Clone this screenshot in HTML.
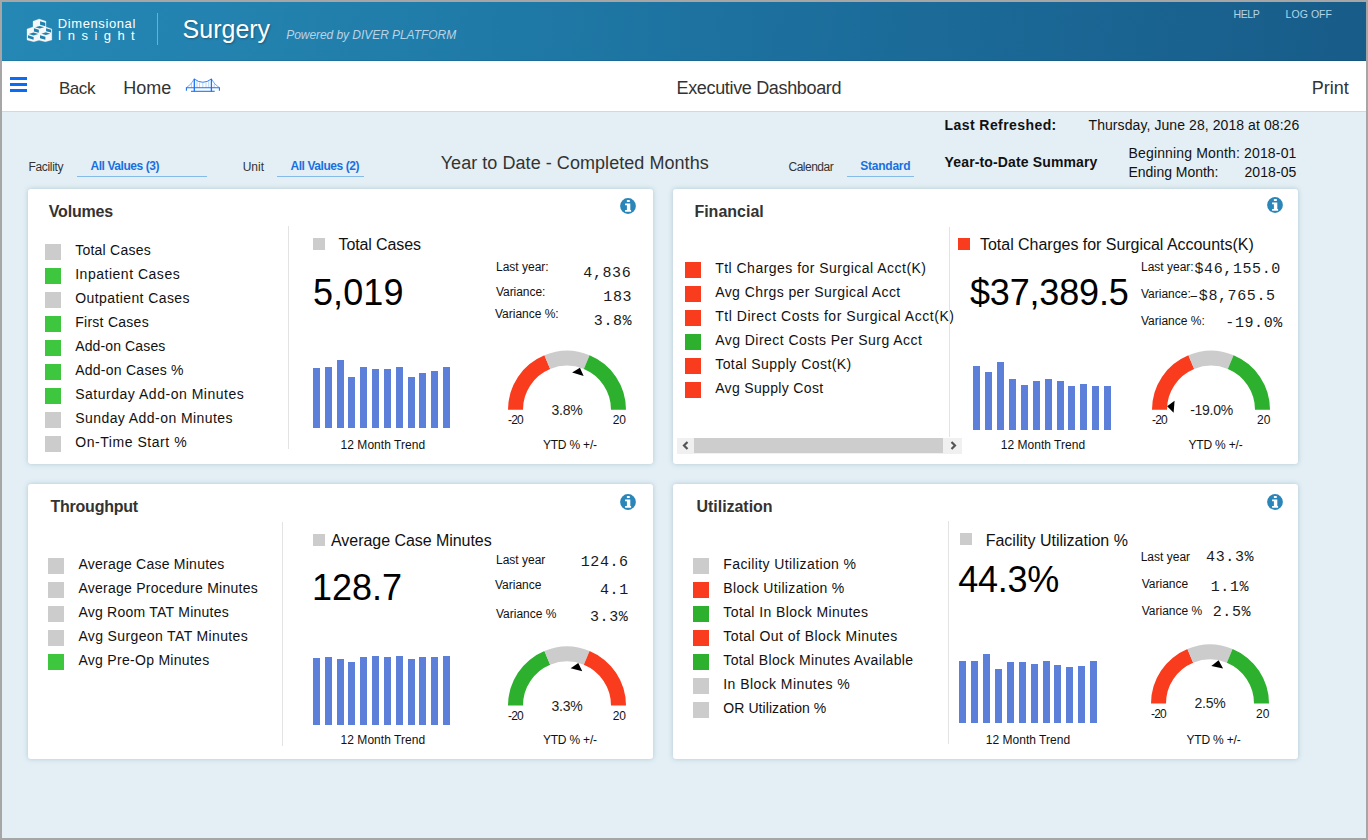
<!DOCTYPE html>
<html><head><meta charset="utf-8"><title>Executive Dashboard</title>
<style>
html,body{margin:0;padding:0;}
body{width:1368px;height:840px;position:relative;overflow:hidden;background:#e3eff5;font-family:'Liberation Sans', sans-serif;}
.t{position:absolute;white-space:nowrap;}
#frame{position:absolute;left:0;top:0;width:1368px;height:840px;box-sizing:border-box;border:2px solid #a6a6a6;pointer-events:none;}
</style></head><body>
<div style="position:absolute;left:0;top:0;width:1368px;height:61px;background:linear-gradient(95deg,#2487b4 0%,#2381ae 20%,#1f7aa7 35%,#1b6a98 68%,#185c89 100%);"></div>
<div style="position:absolute;left:0;top:60px;width:1368px;height:1px;background:rgba(0,30,60,0.12);"></div>
<svg style="position:absolute;left:24px;top:16px" width="30" height="28" viewBox="0 0 900 840">
<path d="M90 390 L270 330 L270 160 L455 90 L660 160 L660 330 L835 390 L835 720 L640 770 L450 730 L290 770 L90 720 Z" fill="#f4f6f7" stroke="#f4f6f7" stroke-width="8" stroke-linejoin="round"/>
<g fill="#1f7fae">
<path d="M482 155 L640 205 L640 310 L482 262 Z"/>
<path d="M335 338 L470 298 L605 338 L470 378 Z"/>
<path d="M298 365 L445 410 L445 505 L298 462 Z"/>
<path d="M662 368 L812 412 L812 498 L662 455 Z"/>
<path d="M145 540 L285 498 L425 540 L285 582 Z"/>
<path d="M525 530 L655 488 L785 530 L655 570 Z"/>
<path d="M118 580 L288 630 L288 712 L118 662 Z"/>
<path d="M480 575 L642 622 L642 712 L480 665 Z"/>
</g></svg>
<div class="t" style="left:57.80px;top:16.99px;font:normal 400 13px/13px 'Liberation Sans', sans-serif;color:#ffffff;letter-spacing:0.598px;">Dimensional</div>
<div class="t" style="left:57.80px;top:28.99px;font:normal 400 13px/13px 'Liberation Sans', sans-serif;color:#ffffff;letter-spacing:6.424px;">Insight</div>
<div style="position:absolute;left:157px;top:13px;width:1px;height:32px;background:rgba(255,255,255,0.35);"></div>
<div class="t" style="left:182.60px;top:16.83px;font:normal 400 25px/25px 'Liberation Sans', sans-serif;color:#ffffff;letter-spacing:-0.006px;text-shadow:1px 1px 2px rgba(0,0,0,0.3);">Surgery</div>
<div class="t" style="left:286.20px;top:28.84px;font:italic 400 12px/12px 'Liberation Sans', sans-serif;color:#b9d3e5;letter-spacing:-0.051px;">Powered by DIVER PLATFORM</div>
<div class="t" style="left:1233.50px;top:9.11px;font:normal 400 10.5px/10.5px 'Liberation Sans', sans-serif;color:#b3d5e6;letter-spacing:-0.399px;">HELP</div>
<div class="t" style="left:1285.50px;top:9.11px;font:normal 400 10.5px/10.5px 'Liberation Sans', sans-serif;color:#b3d5e6;letter-spacing:0.073px;">LOG OFF</div>
<div style="position:absolute;left:0px;top:61px;width:1368px;height:50px;background:#ffffff;"></div>
<div style="position:absolute;left:0px;top:111px;width:1368px;height:1px;background:#d4d8da;"></div>
<div style="position:absolute;left:10px;top:77px;width:17px;height:3px;background:#0a6cf5;"></div>
<div style="position:absolute;left:10px;top:83px;width:17px;height:3px;background:#0a6cf5;"></div>
<div style="position:absolute;left:10px;top:89px;width:17px;height:3px;background:#0a6cf5;"></div>
<div class="t" style="left:58.90px;top:79.91px;font:normal 400 17px/17px 'Liberation Sans', sans-serif;color:#333333;letter-spacing:-0.433px;">Back</div>
<div class="t" style="left:123.30px;top:79.06px;font:normal 400 18px/18px 'Liberation Sans', sans-serif;color:#333333;letter-spacing:-0.001px;">Home</div>
<svg style="position:absolute;left:185px;top:78px" width="36" height="15" viewBox="0 0 36 15">
<g stroke="#1a74f2" fill="none">
<path d="M9.3 0.8 L9.3 13.5 M26.4 0.8 L26.4 13.5" stroke-width="1.3"/>
<path d="M6 13.3 L29.7 13.3" stroke-width="1.1"/>
<path d="M1.4 12.7 L1.4 9.7 L34.4 9.7 L34.4 12.7" stroke-width="1.1"/>
<path d="M9.3 1 Q17.85 7.5 26.4 1" stroke-width="0.9"/>
<path d="M9.3 1 Q6 7 1.4 9.7 M26.4 1 Q29.7 7 34.4 9.7" stroke-width="0.8" opacity="0.75"/>
<path d="M12 3.3 V9.7 M14.6 4.6 V9.7 M17.8 5.1 V9.7 M21 4.6 V9.7 M23.7 3.3 V9.7 M6.5 5.6 V9.7 M29.2 5.6 V9.7" stroke-width="0.9" opacity="0.35"/>
</g></svg>
<div class="t" style="left:676.50px;top:78.96px;font:normal 400 18px/18px 'Liberation Sans', sans-serif;color:#333333;letter-spacing:-0.338px;">Executive Dashboard</div>
<div class="t" style="left:1311.80px;top:79.36px;font:normal 400 18px/18px 'Liberation Sans', sans-serif;color:#333333;letter-spacing:-0.002px;">Print</div>
<div class="t" style="left:28.50px;top:161.04px;font:normal 400 12px/12px 'Liberation Sans', sans-serif;color:#333333;letter-spacing:-0.337px;">Facility</div>
<div class="t" style="left:90.50px;top:159.54px;font:normal 700 12px/12px 'Liberation Sans', sans-serif;color:#1a6fe0;letter-spacing:-0.438px;">All Values (3)</div>
<div style="position:absolute;left:77px;top:176px;width:130px;height:1px;background:#86bbe8;"></div>
<div class="t" style="left:242.70px;top:161.04px;font:normal 400 12px/12px 'Liberation Sans', sans-serif;color:#333333;letter-spacing:-0.003px;">Unit</div>
<div class="t" style="left:290.50px;top:159.54px;font:normal 700 12px/12px 'Liberation Sans', sans-serif;color:#1a6fe0;letter-spacing:-0.440px;">All Values (2)</div>
<div style="position:absolute;left:277px;top:176px;width:87px;height:1px;background:#86bbe8;"></div>
<div class="t" style="left:440.70px;top:153.96px;font:normal 400 18px/18px 'Liberation Sans', sans-serif;color:#333333;letter-spacing:0.052px;">Year to Date - Completed Months</div>
<div class="t" style="left:788.50px;top:160.64px;font:normal 400 12px/12px 'Liberation Sans', sans-serif;color:#333333;letter-spacing:-0.498px;">Calendar</div>
<div class="t" style="left:860.30px;top:159.64px;font:normal 700 12px/12px 'Liberation Sans', sans-serif;color:#1a6fe0;letter-spacing:-0.241px;">Standard</div>
<div style="position:absolute;left:847px;top:176px;width:67px;height:1px;background:#86bbe8;"></div>
<div class="t" style="left:944.60px;top:118.15px;font:normal 700 14px/14px 'Liberation Sans', sans-serif;color:#111111;letter-spacing:0.419px;">Last Refreshed:</div>
<div class="t" style="left:1088.50px;top:118.15px;font:normal 400 14px/14px 'Liberation Sans', sans-serif;color:#111111;letter-spacing:0.078px;">Thursday, June 28, 2018 at 08:26</div>
<div class="t" style="left:944.60px;top:154.55px;font:normal 700 14px/14px 'Liberation Sans', sans-serif;color:#111111;letter-spacing:0.138px;">Year-to-Date Summary</div>
<div class="t" style="left:1128.50px;top:146.35px;font:normal 400 14px/14px 'Liberation Sans', sans-serif;color:#111111;letter-spacing:0.158px;">Beginning Month: 2018-01</div>
<div class="t" style="left:1128.50px;top:164.55px;font:normal 400 14px/14px 'Liberation Sans', sans-serif;color:#111111;letter-spacing:-0.032px;">Ending Month:</div>
<div class="t" style="left:1244.50px;top:164.55px;font:normal 400 14px/14px 'Liberation Sans', sans-serif;color:#111111;letter-spacing:0.070px;">2018-05</div>
<div style="position:absolute;background:#fff;border-radius:3px;box-shadow:0 0 5px 0px rgba(120,150,170,0.45);left:28px;top:189px;width:625px;height:275px;"></div>
<div style="position:absolute;background:#fff;border-radius:3px;box-shadow:0 0 5px 0px rgba(120,150,170,0.45);left:673px;top:189px;width:625px;height:275px;"></div>
<div style="position:absolute;background:#fff;border-radius:3px;box-shadow:0 0 5px 0px rgba(120,150,170,0.45);left:28px;top:484px;width:625px;height:275px;"></div>
<div style="position:absolute;background:#fff;border-radius:3px;box-shadow:0 0 5px 0px rgba(120,150,170,0.45);left:673px;top:484px;width:625px;height:275px;"></div>
<div class="t" style="left:48.80px;top:203.65px;font:normal 700 16px/16px 'Liberation Sans', sans-serif;color:#333333;letter-spacing:-0.184px;">Volumes</div>
<div style="position:absolute;left:45px;top:244px;width:16px;height:16px;background:#cccccc;"></div>
<div class="t" style="left:75.20px;top:243.35px;font:normal 400 14px/14px 'Liberation Sans', sans-serif;color:#111111;letter-spacing:0.241px;">Total Cases</div>
<div style="position:absolute;left:45px;top:268px;width:16px;height:16px;background:#3ec63e;"></div>
<div class="t" style="left:75.20px;top:267.35px;font:normal 400 14px/14px 'Liberation Sans', sans-serif;color:#111111;letter-spacing:0.515px;">Inpatient Cases</div>
<div style="position:absolute;left:45px;top:292px;width:16px;height:16px;background:#cccccc;"></div>
<div class="t" style="left:75.20px;top:291.35px;font:normal 400 14px/14px 'Liberation Sans', sans-serif;color:#111111;letter-spacing:0.412px;">Outpatient Cases</div>
<div style="position:absolute;left:45px;top:316px;width:16px;height:16px;background:#3ec63e;"></div>
<div class="t" style="left:75.20px;top:315.35px;font:normal 400 14px/14px 'Liberation Sans', sans-serif;color:#111111;letter-spacing:0.266px;">First Cases</div>
<div style="position:absolute;left:45px;top:340px;width:16px;height:16px;background:#3ec63e;"></div>
<div class="t" style="left:75.20px;top:339.35px;font:normal 400 14px/14px 'Liberation Sans', sans-serif;color:#111111;letter-spacing:0.127px;">Add-on Cases</div>
<div style="position:absolute;left:45px;top:364px;width:16px;height:16px;background:#3ec63e;"></div>
<div class="t" style="left:75.20px;top:363.35px;font:normal 400 14px/14px 'Liberation Sans', sans-serif;color:#111111;letter-spacing:0.254px;">Add-on Cases %</div>
<div style="position:absolute;left:45px;top:388px;width:16px;height:16px;background:#3ec63e;"></div>
<div class="t" style="left:75.20px;top:387.35px;font:normal 400 14px/14px 'Liberation Sans', sans-serif;color:#111111;letter-spacing:0.517px;">Saturday Add-on Minutes</div>
<div style="position:absolute;left:45px;top:412px;width:16px;height:16px;background:#cccccc;"></div>
<div class="t" style="left:75.20px;top:411.35px;font:normal 400 14px/14px 'Liberation Sans', sans-serif;color:#111111;letter-spacing:0.436px;">Sunday Add-on Minutes</div>
<div style="position:absolute;left:45px;top:436px;width:16px;height:16px;background:#cccccc;"></div>
<div class="t" style="left:75.20px;top:435.35px;font:normal 400 14px/14px 'Liberation Sans', sans-serif;color:#111111;letter-spacing:0.553px;">On-Time Start %</div>
<div style="position:absolute;left:288px;top:226px;width:1px;height:223px;background:#e3e3e3;"></div>
<div style="position:absolute;left:313px;top:238px;width:12px;height:12px;background:#cccccc;"></div>
<div class="t" style="left:338.50px;top:237.45px;font:normal 400 16px/16px 'Liberation Sans', sans-serif;color:#111111;letter-spacing:-0.109px;">Total Cases</div>
<div class="t" style="left:312.90px;top:274.52px;font:normal 400 36px/36px 'Liberation Sans', sans-serif;color:#000000;letter-spacing:0.108px;">5,019</div>
<div class="t" style="left:496.00px;top:260.84px;font:normal 400 12px/12px 'Liberation Sans', sans-serif;color:#111111;letter-spacing:-0.007px;">Last year:</div>
<div class="t" style="left:496.00px;top:285.84px;font:normal 400 12px/12px 'Liberation Sans', sans-serif;color:#111111;letter-spacing:-0.059px;">Variance:</div>
<div class="t" style="left:495.00px;top:308.14px;font:normal 400 12px/12px 'Liberation Sans', sans-serif;color:#111111;letter-spacing:-0.017px;">Variance %:</div>
<div class="t" style="left:583.30px;top:265.61px;font:normal 400 15px/15px 'Liberation Mono', monospace;color:#1a1a1a;letter-spacing:0.600px;">4,836</div>
<div class="t" style="left:603.30px;top:290.41px;font:normal 400 15px/15px 'Liberation Mono', monospace;color:#1a1a1a;letter-spacing:0.600px;">183</div>
<div class="t" style="left:593.80px;top:313.81px;font:normal 400 15px/15px 'Liberation Mono', monospace;color:#1a1a1a;letter-spacing:0.600px;">3.8%</div>
<div style="position:absolute;left:313px;top:368px;width:7px;height:60px;background:#5c80d9;"></div>
<div style="position:absolute;left:325px;top:367px;width:7px;height:61px;background:#5c80d9;"></div>
<div style="position:absolute;left:337px;top:360px;width:7px;height:68px;background:#5c80d9;"></div>
<div style="position:absolute;left:348px;top:377px;width:7px;height:51px;background:#5c80d9;"></div>
<div style="position:absolute;left:360px;top:367px;width:7px;height:61px;background:#5c80d9;"></div>
<div style="position:absolute;left:372px;top:369px;width:7px;height:59px;background:#5c80d9;"></div>
<div style="position:absolute;left:384px;top:369px;width:7px;height:59px;background:#5c80d9;"></div>
<div style="position:absolute;left:396px;top:367px;width:7px;height:61px;background:#5c80d9;"></div>
<div style="position:absolute;left:408px;top:377px;width:7px;height:51px;background:#5c80d9;"></div>
<div style="position:absolute;left:419px;top:373px;width:7px;height:55px;background:#5c80d9;"></div>
<div style="position:absolute;left:431px;top:371px;width:7px;height:57px;background:#5c80d9;"></div>
<div style="position:absolute;left:443px;top:367px;width:7px;height:61px;background:#5c80d9;"></div>
<div class="t" style="left:340.60px;top:438.84px;font:normal 400 12px/12px 'Liberation Sans', sans-serif;color:#111111;letter-spacing:0.031px;">12 Month Trend</div>
<svg style="position:absolute;left:0;top:0" width="1368" height="840"><path d="M508.00 409.70 A59 59 0 0 1 544.42 355.19 L550.16 369.05 A44 44 0 0 0 523.00 409.70 Z" fill="#fa3c1e"/><path d="M544.42 355.19 A59 59 0 0 1 589.58 355.19 L583.84 369.05 A44 44 0 0 0 550.16 369.05 Z" fill="#cccccc"/><path d="M589.58 355.19 A59 59 0 0 1 626.00 409.70 L611.00 409.70 A44 44 0 0 0 583.84 369.05 Z" fill="#2db02d"/><path d="M579.94 367.65 L572.14 372.57 L583.61 376.10 Z" fill="#000"/></svg>
<div class="t" style="left:267.00px;width:600px;text-align:center;top:403.15px;font:normal 400 14px/14px 'Liberation Sans', sans-serif;color:#222222;letter-spacing:-0.287px;">3.8%</div>
<div class="t" style="left:508.00px;top:414.14px;font:normal 400 12px/12px 'Liberation Sans', sans-serif;color:#111111;letter-spacing:-0.835px;">-20</div>
<div class="t" style="left:612.70px;top:414.14px;font:normal 400 12px/12px 'Liberation Sans', sans-serif;color:#111111;letter-spacing:0.000px;">20</div>
<div class="t" style="left:542.90px;top:438.84px;font:normal 400 12px/12px 'Liberation Sans', sans-serif;color:#111111;letter-spacing:-0.185px;">YTD % +/-</div>
<svg style="position:absolute;left:620px;top:198px" width="16" height="16" viewBox="0 0 16 16">
<circle cx="8" cy="8" r="7.9" fill="#2a86b9"/><rect x="6.9" y="2" width="2.9" height="2.1" rx="0.5" fill="#fff"/>
<path d="M5.1 5.6 H10.3 V12.1 H11.1 V13.8 H5.1 V12.1 H6.9 V7.3 H5.1 Z" fill="#fff"/></svg>
<div class="t" style="left:694.40px;top:203.65px;font:normal 700 16px/16px 'Liberation Sans', sans-serif;color:#333333;letter-spacing:-0.001px;">Financial</div>
<div style="position:absolute;left:685px;top:262px;width:16px;height:16px;background:#fa3c1e;"></div>
<div class="t" style="left:715.20px;top:261.35px;font:normal 400 14px/14px 'Liberation Sans', sans-serif;color:#111111;letter-spacing:0.477px;">Ttl Charges for Surgical Acct(K)</div>
<div style="position:absolute;left:685px;top:286px;width:16px;height:16px;background:#fa3c1e;"></div>
<div class="t" style="left:715.20px;top:285.35px;font:normal 400 14px/14px 'Liberation Sans', sans-serif;color:#111111;letter-spacing:0.423px;">Avg Chrgs per Surgical Acct</div>
<div style="position:absolute;left:685px;top:310px;width:16px;height:16px;background:#fa3c1e;"></div>
<div class="t" style="left:715.20px;top:309.35px;font:normal 400 14px/14px 'Liberation Sans', sans-serif;color:#111111;letter-spacing:0.539px;">Ttl Direct Costs for Surgical Acct(K)</div>
<div style="position:absolute;left:685px;top:334px;width:16px;height:16px;background:#2db02d;"></div>
<div class="t" style="left:715.20px;top:333.35px;font:normal 400 14px/14px 'Liberation Sans', sans-serif;color:#111111;letter-spacing:0.456px;">Avg Direct Costs Per Surg Acct</div>
<div style="position:absolute;left:685px;top:358px;width:16px;height:16px;background:#fa3c1e;"></div>
<div class="t" style="left:715.20px;top:357.35px;font:normal 400 14px/14px 'Liberation Sans', sans-serif;color:#111111;letter-spacing:0.447px;">Total Supply Cost(K)</div>
<div style="position:absolute;left:685px;top:382px;width:16px;height:16px;background:#fa3c1e;"></div>
<div class="t" style="left:715.20px;top:381.35px;font:normal 400 14px/14px 'Liberation Sans', sans-serif;color:#111111;letter-spacing:0.336px;">Avg Supply Cost</div>
<div style="position:absolute;left:949px;top:227px;width:1px;height:210px;background:#e3e3e3;"></div>
<div style="position:absolute;left:677px;top:438px;width:285px;height:16px;background:#f0f0f0;"></div>
<div style="position:absolute;left:694px;top:438px;width:249px;height:15px;background:#cdcdcd;"></div>
<svg style="position:absolute;left:677px;top:438px" width="285" height="15"><path d="M10.5 4 L7 7.5 L10.5 11" stroke="#555555" stroke-width="2.2" fill="none"/><path d="M274.5 4 L278 7.5 L274.5 11" stroke="#555555" stroke-width="2.2" fill="none"/></svg>
<div style="position:absolute;left:958px;top:238px;width:12px;height:12px;background:#fa3c1e;"></div>
<div class="t" style="left:980.00px;top:237.45px;font:normal 400 16px/16px 'Liberation Sans', sans-serif;color:#111111;letter-spacing:-0.028px;">Total Charges for Surgical Accounts(K)</div>
<div class="t" style="left:970.00px;top:274.52px;font:normal 400 36px/36px 'Liberation Sans', sans-serif;color:#000000;letter-spacing:-0.179px;">$37,389.5</div>
<div class="t" style="left:1141.00px;top:260.84px;font:normal 400 12px/12px 'Liberation Sans', sans-serif;color:#111111;letter-spacing:0.000px;">Last year:</div>
<div class="t" style="left:1141.00px;top:288.14px;font:normal 400 12px/12px 'Liberation Sans', sans-serif;color:#111111;letter-spacing:0.000px;">Variance:</div>
<div class="t" style="left:1141.00px;top:314.84px;font:normal 400 12px/12px 'Liberation Sans', sans-serif;color:#111111;letter-spacing:0.000px;">Variance %:</div>
<div class="t" style="left:1194.50px;top:262.21px;font:normal 400 15px/15px 'Liberation Mono', monospace;color:#1a1a1a;letter-spacing:0.600px;">$46,155.0</div>
<div class="t" style="left:1189.20px;top:288.81px;font:normal 400 15px/15px 'Liberation Mono', monospace;color:#1a1a1a;letter-spacing:0.600px;">–$8,765.5</div>
<div class="t" style="left:1225.30px;top:315.51px;font:normal 400 15px/15px 'Liberation Mono', monospace;color:#1a1a1a;letter-spacing:0.600px;">-19.0%</div>
<div style="position:absolute;left:973px;top:366px;width:7px;height:64px;background:#5c80d9;"></div>
<div style="position:absolute;left:985px;top:372px;width:7px;height:58px;background:#5c80d9;"></div>
<div style="position:absolute;left:997px;top:362px;width:7px;height:68px;background:#5c80d9;"></div>
<div style="position:absolute;left:1009px;top:379px;width:7px;height:51px;background:#5c80d9;"></div>
<div style="position:absolute;left:1021px;top:385px;width:7px;height:45px;background:#5c80d9;"></div>
<div style="position:absolute;left:1033px;top:381px;width:7px;height:49px;background:#5c80d9;"></div>
<div style="position:absolute;left:1045px;top:379px;width:7px;height:51px;background:#5c80d9;"></div>
<div style="position:absolute;left:1057px;top:381px;width:7px;height:49px;background:#5c80d9;"></div>
<div style="position:absolute;left:1068px;top:386px;width:7px;height:44px;background:#5c80d9;"></div>
<div style="position:absolute;left:1080px;top:384px;width:7px;height:46px;background:#5c80d9;"></div>
<div style="position:absolute;left:1092px;top:386px;width:7px;height:44px;background:#5c80d9;"></div>
<div style="position:absolute;left:1104px;top:386px;width:7px;height:44px;background:#5c80d9;"></div>
<div class="t" style="left:1000.70px;top:439.14px;font:normal 400 12px/12px 'Liberation Sans', sans-serif;color:#111111;letter-spacing:0.031px;">12 Month Trend</div>
<svg style="position:absolute;left:0;top:0" width="1368" height="840"><path d="M1152.00 409.70 A59 59 0 0 1 1188.42 355.19 L1194.16 369.05 A44 44 0 0 0 1167.00 409.70 Z" fill="#fa3c1e"/><path d="M1188.42 355.19 A59 59 0 0 1 1233.58 355.19 L1227.84 369.05 A44 44 0 0 0 1194.16 369.05 Z" fill="#cccccc"/><path d="M1233.58 355.19 A59 59 0 0 1 1270.00 409.70 L1255.00 409.70 A44 44 0 0 0 1227.84 369.05 Z" fill="#2db02d"/><path d="M1167.14 406.25 L1173.64 412.78 L1174.58 400.82 Z" fill="#000"/></svg>
<div class="t" style="left:911.50px;width:600px;text-align:center;top:403.15px;font:normal 400 14px/14px 'Liberation Sans', sans-serif;color:#222222;letter-spacing:-0.287px;">-19.0%</div>
<div class="t" style="left:1152.00px;top:414.14px;font:normal 400 12px/12px 'Liberation Sans', sans-serif;color:#111111;letter-spacing:-0.835px;">-20</div>
<div class="t" style="left:1257.00px;top:414.14px;font:normal 400 12px/12px 'Liberation Sans', sans-serif;color:#111111;letter-spacing:0.000px;">20</div>
<div class="t" style="left:1188.50px;top:439.14px;font:normal 400 12px/12px 'Liberation Sans', sans-serif;color:#111111;letter-spacing:-0.185px;">YTD % +/-</div>
<svg style="position:absolute;left:1267px;top:197px" width="16" height="16" viewBox="0 0 16 16">
<circle cx="8" cy="8" r="7.9" fill="#2a86b9"/><rect x="6.9" y="2" width="2.9" height="2.1" rx="0.5" fill="#fff"/>
<path d="M5.1 5.6 H10.3 V12.1 H11.1 V13.8 H5.1 V12.1 H6.9 V7.3 H5.1 Z" fill="#fff"/></svg>
<div class="t" style="left:50.50px;top:498.65px;font:normal 700 16px/16px 'Liberation Sans', sans-serif;color:#333333;letter-spacing:-0.235px;">Throughput</div>
<div style="position:absolute;left:48px;top:558px;width:16px;height:16px;background:#cccccc;"></div>
<div class="t" style="left:78.40px;top:557.35px;font:normal 400 14px/14px 'Liberation Sans', sans-serif;color:#111111;letter-spacing:0.239px;">Average Case Minutes</div>
<div style="position:absolute;left:48px;top:582px;width:16px;height:16px;background:#cccccc;"></div>
<div class="t" style="left:78.40px;top:581.35px;font:normal 400 14px/14px 'Liberation Sans', sans-serif;color:#111111;letter-spacing:0.253px;">Average Procedure Minutes</div>
<div style="position:absolute;left:48px;top:606px;width:16px;height:16px;background:#cccccc;"></div>
<div class="t" style="left:78.40px;top:605.35px;font:normal 400 14px/14px 'Liberation Sans', sans-serif;color:#111111;letter-spacing:0.239px;">Avg Room TAT Minutes</div>
<div style="position:absolute;left:48px;top:630px;width:16px;height:16px;background:#cccccc;"></div>
<div class="t" style="left:78.40px;top:629.35px;font:normal 400 14px/14px 'Liberation Sans', sans-serif;color:#111111;letter-spacing:0.364px;">Avg Surgeon TAT Minutes</div>
<div style="position:absolute;left:48px;top:654px;width:16px;height:16px;background:#3ec63e;"></div>
<div class="t" style="left:78.40px;top:653.35px;font:normal 400 14px/14px 'Liberation Sans', sans-serif;color:#111111;letter-spacing:0.295px;">Avg Pre-Op Minutes</div>
<div style="position:absolute;left:282px;top:522px;width:1px;height:224px;background:#e3e3e3;"></div>
<div style="position:absolute;left:313px;top:534px;width:12px;height:12px;background:#cccccc;"></div>
<div class="t" style="left:331.00px;top:533.45px;font:normal 400 16px/16px 'Liberation Sans', sans-serif;color:#111111;letter-spacing:-0.046px;">Average Case Minutes</div>
<div class="t" style="left:312.00px;top:569.52px;font:normal 400 36px/36px 'Liberation Sans', sans-serif;color:#000000;letter-spacing:-0.017px;">128.7</div>
<div class="t" style="left:496.00px;top:554.14px;font:normal 400 12px/12px 'Liberation Sans', sans-serif;color:#111111;letter-spacing:0.000px;">Last year</div>
<div class="t" style="left:495.00px;top:579.14px;font:normal 400 12px/12px 'Liberation Sans', sans-serif;color:#111111;letter-spacing:0.000px;">Variance</div>
<div class="t" style="left:496.00px;top:607.54px;font:normal 400 12px/12px 'Liberation Sans', sans-serif;color:#111111;letter-spacing:0.000px;">Variance %</div>
<div class="t" style="left:580.70px;top:555.21px;font:normal 400 15px/15px 'Liberation Mono', monospace;color:#1a1a1a;letter-spacing:0.600px;">124.6</div>
<div class="t" style="left:600.00px;top:582.81px;font:normal 400 15px/15px 'Liberation Mono', monospace;color:#1a1a1a;letter-spacing:0.600px;">4.1</div>
<div class="t" style="left:590.00px;top:610.21px;font:normal 400 15px/15px 'Liberation Mono', monospace;color:#1a1a1a;letter-spacing:0.600px;">3.3%</div>
<div style="position:absolute;left:313px;top:658px;width:7px;height:67px;background:#5c80d9;"></div>
<div style="position:absolute;left:325px;top:657px;width:7px;height:68px;background:#5c80d9;"></div>
<div style="position:absolute;left:337px;top:659px;width:7px;height:66px;background:#5c80d9;"></div>
<div style="position:absolute;left:348px;top:662px;width:7px;height:63px;background:#5c80d9;"></div>
<div style="position:absolute;left:360px;top:657px;width:7px;height:68px;background:#5c80d9;"></div>
<div style="position:absolute;left:372px;top:656px;width:7px;height:69px;background:#5c80d9;"></div>
<div style="position:absolute;left:384px;top:657px;width:7px;height:68px;background:#5c80d9;"></div>
<div style="position:absolute;left:396px;top:656px;width:7px;height:69px;background:#5c80d9;"></div>
<div style="position:absolute;left:408px;top:659px;width:7px;height:66px;background:#5c80d9;"></div>
<div style="position:absolute;left:419px;top:657px;width:7px;height:68px;background:#5c80d9;"></div>
<div style="position:absolute;left:431px;top:657px;width:7px;height:68px;background:#5c80d9;"></div>
<div style="position:absolute;left:443px;top:656px;width:7px;height:69px;background:#5c80d9;"></div>
<div class="t" style="left:340.60px;top:734.14px;font:normal 400 12px/12px 'Liberation Sans', sans-serif;color:#111111;letter-spacing:0.031px;">12 Month Trend</div>
<svg style="position:absolute;left:0;top:0" width="1368" height="840"><path d="M508.00 705.50 A59 59 0 0 1 544.42 650.99 L550.16 664.85 A44 44 0 0 0 523.00 705.50 Z" fill="#2db02d"/><path d="M544.42 650.99 A59 59 0 0 1 589.58 650.99 L583.84 664.85 A44 44 0 0 0 550.16 664.85 Z" fill="#cccccc"/><path d="M589.58 650.99 A59 59 0 0 1 626.00 705.50 L611.00 705.50 A44 44 0 0 0 583.84 664.85 Z" fill="#fa3c1e"/><path d="M578.28 662.97 L570.68 668.20 L582.28 671.27 Z" fill="#000"/></svg>
<div class="t" style="left:267.00px;width:600px;text-align:center;top:699.15px;font:normal 400 14px/14px 'Liberation Sans', sans-serif;color:#222222;letter-spacing:-0.287px;">3.3%</div>
<div class="t" style="left:508.00px;top:710.14px;font:normal 400 12px/12px 'Liberation Sans', sans-serif;color:#111111;letter-spacing:-0.835px;">-20</div>
<div class="t" style="left:612.70px;top:710.14px;font:normal 400 12px/12px 'Liberation Sans', sans-serif;color:#111111;letter-spacing:0.000px;">20</div>
<div class="t" style="left:542.90px;top:734.14px;font:normal 400 12px/12px 'Liberation Sans', sans-serif;color:#111111;letter-spacing:-0.185px;">YTD % +/-</div>
<svg style="position:absolute;left:620px;top:493.7px" width="16" height="16" viewBox="0 0 16 16">
<circle cx="8" cy="8" r="7.9" fill="#2a86b9"/><rect x="6.9" y="2" width="2.9" height="2.1" rx="0.5" fill="#fff"/>
<path d="M5.1 5.6 H10.3 V12.1 H11.1 V13.8 H5.1 V12.1 H6.9 V7.3 H5.1 Z" fill="#fff"/></svg>
<div class="t" style="left:696.50px;top:498.65px;font:normal 700 16px/16px 'Liberation Sans', sans-serif;color:#333333;letter-spacing:-0.036px;">Utilization</div>
<div style="position:absolute;left:693px;top:558px;width:16px;height:16px;background:#cccccc;"></div>
<div class="t" style="left:723.30px;top:557.35px;font:normal 400 14px/14px 'Liberation Sans', sans-serif;color:#111111;letter-spacing:0.392px;">Facility Utilization %</div>
<div style="position:absolute;left:693px;top:582px;width:16px;height:16px;background:#fa3c1e;"></div>
<div class="t" style="left:723.30px;top:581.35px;font:normal 400 14px/14px 'Liberation Sans', sans-serif;color:#111111;letter-spacing:0.323px;">Block Utilization %</div>
<div style="position:absolute;left:693px;top:606px;width:16px;height:16px;background:#2db02d;"></div>
<div class="t" style="left:723.30px;top:605.35px;font:normal 400 14px/14px 'Liberation Sans', sans-serif;color:#111111;letter-spacing:0.402px;">Total In Block Minutes</div>
<div style="position:absolute;left:693px;top:630px;width:16px;height:16px;background:#fa3c1e;"></div>
<div class="t" style="left:723.30px;top:629.35px;font:normal 400 14px/14px 'Liberation Sans', sans-serif;color:#111111;letter-spacing:0.456px;">Total Out of Block Minutes</div>
<div style="position:absolute;left:693px;top:654px;width:16px;height:16px;background:#2db02d;"></div>
<div class="t" style="left:723.30px;top:653.35px;font:normal 400 14px/14px 'Liberation Sans', sans-serif;color:#111111;letter-spacing:0.340px;">Total Block Minutes Available</div>
<div style="position:absolute;left:693px;top:678px;width:16px;height:16px;background:#cccccc;"></div>
<div class="t" style="left:723.30px;top:677.35px;font:normal 400 14px/14px 'Liberation Sans', sans-serif;color:#111111;letter-spacing:0.426px;">In Block Minutes %</div>
<div style="position:absolute;left:693px;top:702px;width:16px;height:16px;background:#cccccc;"></div>
<div class="t" style="left:723.30px;top:701.35px;font:normal 400 14px/14px 'Liberation Sans', sans-serif;color:#111111;letter-spacing:0.069px;">OR Utilization %</div>
<div style="position:absolute;left:948px;top:521px;width:1px;height:223px;background:#e3e3e3;"></div>
<div style="position:absolute;left:960px;top:533px;width:12px;height:12px;background:#cccccc;"></div>
<div class="t" style="left:985.70px;top:533.45px;font:normal 400 16px/16px 'Liberation Sans', sans-serif;color:#111111;letter-spacing:-0.001px;">Facility Utilization %</div>
<div class="t" style="left:958.30px;top:562.22px;font:normal 400 36px/36px 'Liberation Sans', sans-serif;color:#000000;letter-spacing:-0.267px;">44.3%</div>
<div class="t" style="left:1140.70px;top:550.84px;font:normal 400 12px/12px 'Liberation Sans', sans-serif;color:#111111;letter-spacing:0.000px;">Last year</div>
<div class="t" style="left:1141.70px;top:578.14px;font:normal 400 12px/12px 'Liberation Sans', sans-serif;color:#111111;letter-spacing:0.000px;">Variance</div>
<div class="t" style="left:1141.70px;top:604.84px;font:normal 400 12px/12px 'Liberation Sans', sans-serif;color:#111111;letter-spacing:0.000px;">Variance %</div>
<div class="t" style="left:1206.10px;top:549.71px;font:normal 400 15px/15px 'Liberation Mono', monospace;color:#1a1a1a;letter-spacing:0.600px;">43.3%</div>
<div class="t" style="left:1210.70px;top:579.51px;font:normal 400 15px/15px 'Liberation Mono', monospace;color:#1a1a1a;letter-spacing:0.600px;">1.1%</div>
<div class="t" style="left:1212.70px;top:604.91px;font:normal 400 15px/15px 'Liberation Mono', monospace;color:#1a1a1a;letter-spacing:0.600px;">2.5%</div>
<div style="position:absolute;left:959px;top:661px;width:7px;height:62px;background:#5c80d9;"></div>
<div style="position:absolute;left:971px;top:661px;width:7px;height:62px;background:#5c80d9;"></div>
<div style="position:absolute;left:983px;top:654px;width:7px;height:69px;background:#5c80d9;"></div>
<div style="position:absolute;left:995px;top:669px;width:7px;height:54px;background:#5c80d9;"></div>
<div style="position:absolute;left:1007px;top:662px;width:7px;height:61px;background:#5c80d9;"></div>
<div style="position:absolute;left:1019px;top:662px;width:7px;height:61px;background:#5c80d9;"></div>
<div style="position:absolute;left:1031px;top:664px;width:7px;height:59px;background:#5c80d9;"></div>
<div style="position:absolute;left:1043px;top:661px;width:7px;height:62px;background:#5c80d9;"></div>
<div style="position:absolute;left:1054px;top:665px;width:7px;height:58px;background:#5c80d9;"></div>
<div style="position:absolute;left:1066px;top:667px;width:7px;height:56px;background:#5c80d9;"></div>
<div style="position:absolute;left:1078px;top:666px;width:7px;height:57px;background:#5c80d9;"></div>
<div style="position:absolute;left:1090px;top:661px;width:7px;height:62px;background:#5c80d9;"></div>
<div class="t" style="left:985.70px;top:734.14px;font:normal 400 12px/12px 'Liberation Sans', sans-serif;color:#111111;letter-spacing:0.031px;">12 Month Trend</div>
<svg style="position:absolute;left:0;top:0" width="1368" height="840"><path d="M1151.00 703.50 A59 59 0 0 1 1187.42 648.99 L1193.16 662.85 A44 44 0 0 0 1166.00 703.50 Z" fill="#fa3c1e"/><path d="M1187.42 648.99 A59 59 0 0 1 1232.58 648.99 L1226.84 662.85 A44 44 0 0 0 1193.16 662.85 Z" fill="#cccccc"/><path d="M1232.58 648.99 A59 59 0 0 1 1269.00 703.50 L1254.00 703.50 A44 44 0 0 0 1226.84 662.85 Z" fill="#2db02d"/><path d="M1218.58 660.35 L1211.33 666.04 L1223.10 668.38 Z" fill="#000"/></svg>
<div class="t" style="left:910.00px;width:600px;text-align:center;top:696.15px;font:normal 400 14px/14px 'Liberation Sans', sans-serif;color:#222222;letter-spacing:-0.287px;">2.5%</div>
<div class="t" style="left:1151.00px;top:707.54px;font:normal 400 12px/12px 'Liberation Sans', sans-serif;color:#111111;letter-spacing:-0.835px;">-20</div>
<div class="t" style="left:1256.00px;top:707.54px;font:normal 400 12px/12px 'Liberation Sans', sans-serif;color:#111111;letter-spacing:0.000px;">20</div>
<div class="t" style="left:1186.50px;top:734.14px;font:normal 400 12px/12px 'Liberation Sans', sans-serif;color:#111111;letter-spacing:-0.185px;">YTD % +/-</div>
<svg style="position:absolute;left:1267px;top:493.7px" width="16" height="16" viewBox="0 0 16 16">
<circle cx="8" cy="8" r="7.9" fill="#2a86b9"/><rect x="6.9" y="2" width="2.9" height="2.1" rx="0.5" fill="#fff"/>
<path d="M5.1 5.6 H10.3 V12.1 H11.1 V13.8 H5.1 V12.1 H6.9 V7.3 H5.1 Z" fill="#fff"/></svg>
<div id="frame"></div>
</body></html>
